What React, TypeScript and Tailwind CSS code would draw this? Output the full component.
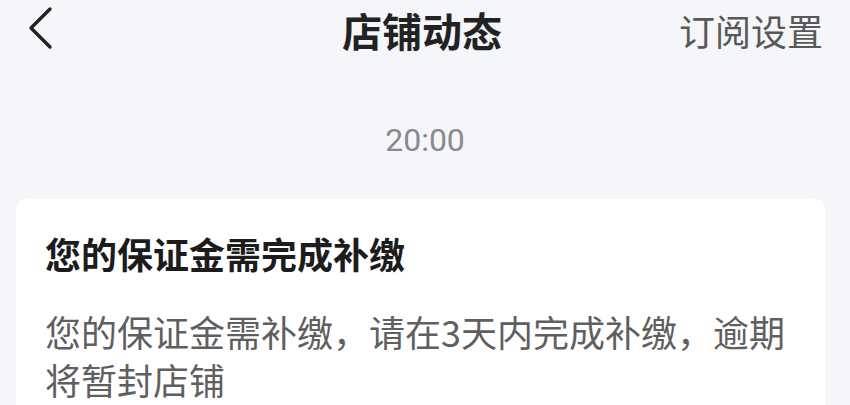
export default function App() {
  return (
    <div
      className="h-[405px] w-[850px] overflow-hidden bg-[#f5f6fa]"
      style={{ fontFamily: '"Noto Sans CJK SC", "Noto Sans", sans-serif' }}
    >
      {/* Header */}
      <div className="flex h-[60px] items-center">
        <div className="flex w-[165px] items-center pl-[26px]">
          <svg className="-mt-[4px] h-[44px] w-[28px]" viewBox="0 0 28 44" fill="none">
            <path
              d="M24 3 L5 22 L24 41"
              stroke="#222"
              strokeWidth="3.4"
              strokeLinecap="round"
              strokeLinejoin="round"
            />
          </svg>
        </div>
        <div className="flex-1 text-center text-[40px] font-bold leading-[58px] text-[#222]">
          店铺动态
        </div>
        <div className="w-[171px] pr-[27px] text-right text-[36px] leading-[52px] text-[#585858]">
          订阅设置
        </div>
      </div>

      {/* Time */}
      <div
        className="mt-[64px] text-center text-[32px] leading-none text-[#8a8a8e]"
        style={{ fontFamily: "Roboto, sans-serif" }}
      >
        20:00
      </div>

      {/* Card */}
      <div className="ml-4 mt-[43px] w-[809px] rounded-[10px] bg-white pl-[29px] pr-6 pt-[34px] pb-6">
        <div className="text-[36px] font-bold leading-[40px] text-[#1c1c1c]">
          您的保证金需完成补缴
        </div>
        <div className="mt-[34px] text-[36px] leading-[48px] text-[#5f5f5f]">
          您的保证金需补缴，请在3天内完成补缴，逾期
          <br />
          将暂封店铺
        </div>
      </div>
    </div>
  );
}
